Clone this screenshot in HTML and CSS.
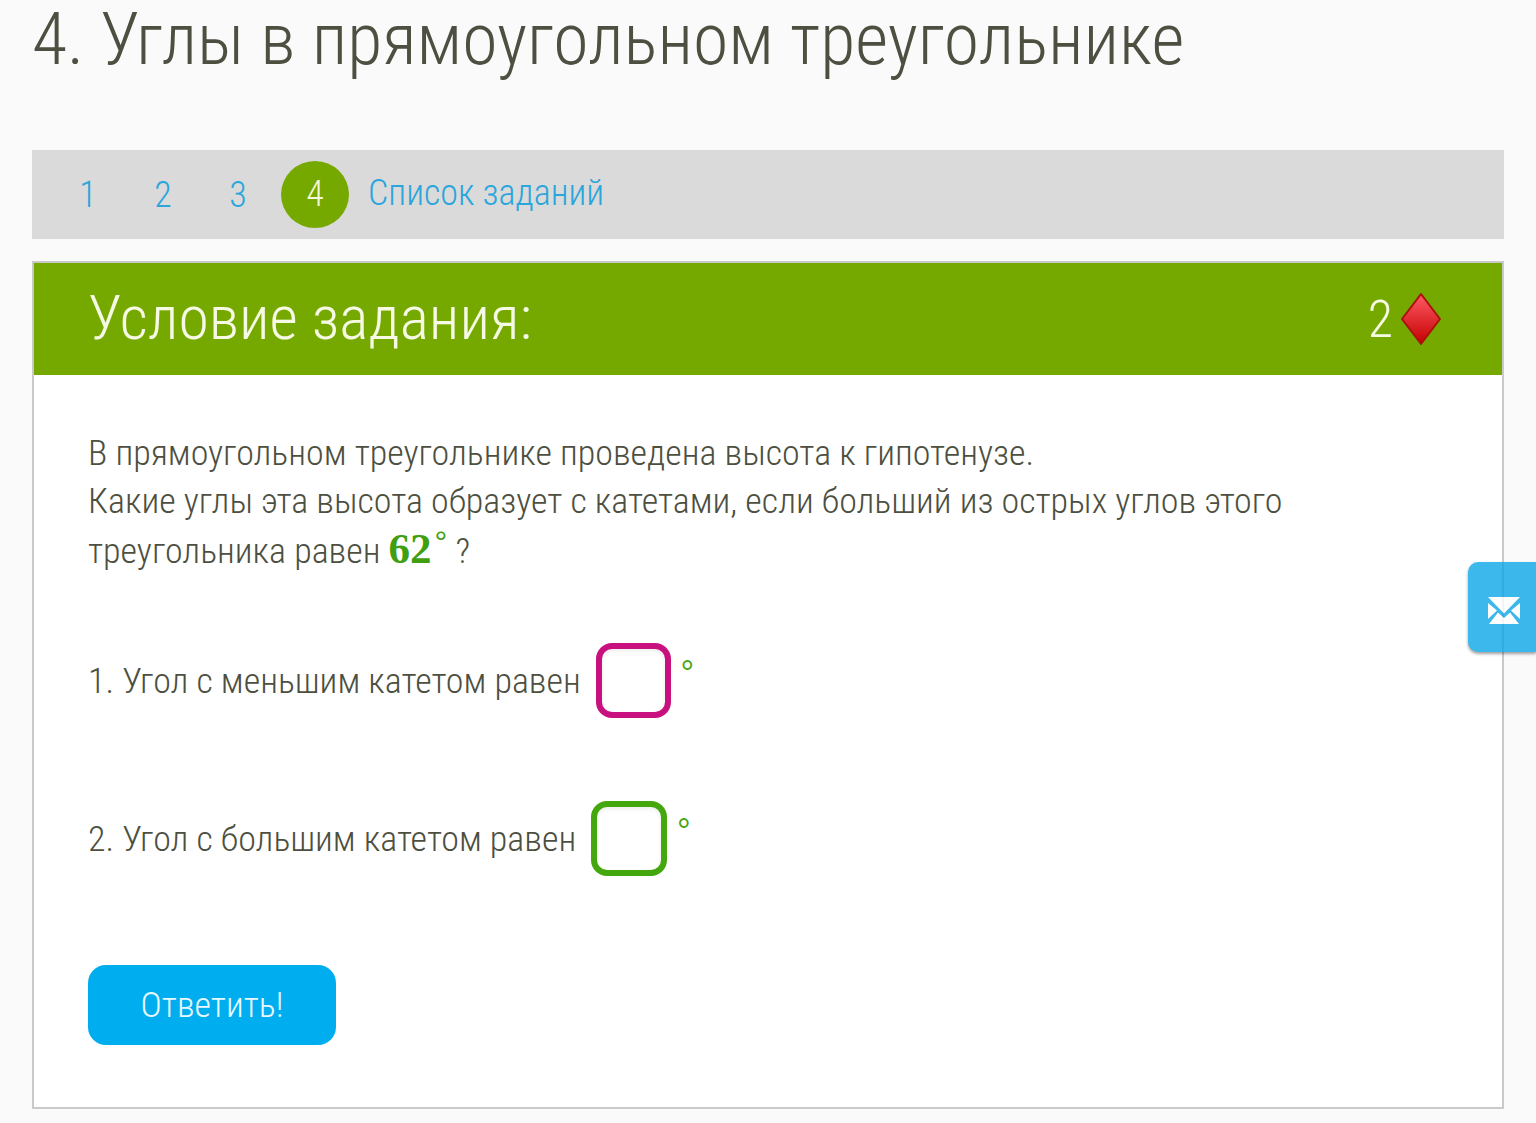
FILE: index.html
```html
<!DOCTYPE html>
<html lang="ru">

<head>
  <meta charset="UTF-8" />
  <meta name="viewport" content="width=device-width, initial-scale=1.0" />
  <title>Углы в прямоугольном треугольнике</title>
  <link rel="stylesheet" href="styles.css">
</head>

<body>
  <h1 class="title">4. Углы в прямоугольном треугольнике</h1>

  <nav class="tabs">
    <a class="tab">1</a>
    <a class="tab">2</a>
    <a class="tab">3</a>
    <a class="tab tab-active">4</a>
    <a class="tab-list">Список заданий</a>
  </nav>

  <section class="card">
    <header class="card-head">
      <h2 class="card-title">Условие задания:</h2>
      <div class="points">
        <span>2</span>
        <svg class="diamond" width="42" height="54" viewBox="0 0 42 54">
          <defs>
            <linearGradient id="ruby" x1="0" y1="0" x2="0" y2="1">
              <stop offset="0" stop-color="#ff5a66" />
              <stop offset="1" stop-color="#c40000" />
            </linearGradient>
          </defs>
          <path d="M21 2 L40 27 L21 52 L2 27 Z" fill="url(#ruby)" stroke="#a81208" stroke-width="2" stroke-linejoin="round" />
        </svg>
      </div>
    </header>

    <div class="card-body">
      <p class="task">В прямоугольном треугольнике проведена высота к гипотенузе.<br>
        Какие углы эта высота образует с катетами, если больший из острых углов этого<br>
        треугольника равен <span class="math">62<span class="deg">°</span></span> ?</p>

      <div class="answer answer-first">
        <span class="answer-label">1. Угол с меньшим катетом равен</span>
        <input class="box box-pink" />
        <span class="unit">°</span>
      </div>

      <div class="answer answer-second">
        <span class="answer-label">2. Угол с большим катетом равен</span>
        <input class="box box-green" />
        <span class="unit">°</span>
      </div>

      <button class="submit">Ответить!</button>
    </div>
  </section>

  <a class="mail">
    <svg class="mail-icon" width="32" height="27" viewBox="0 0 32 27">
      <path d="M0 0 H32 L16 16.5 Z M0 6 L9 13.5 L0 22 Z M32 6 L23 13.5 L32 22 Z M1 27 L10 15.5 L16 21 L22 15.5 L31 27 Z" fill="#fff" />
    </svg>
  </a>
</body>

</html>
```

FILE: styles.css
```css
body {
  margin: 0;
  height: 1123px;
  overflow: hidden;
  background: #fafafa;
  color: #4d4f40;
  font-family: "Roboto", "Liberation Sans", sans-serif;
  font-stretch: 75%;
  font-weight: 300;
  padding: 0 32px;
  box-sizing: border-box;
  position: relative;
}

.title {
  margin: 0;
  height: 150px;
  font-size: 71.9px;
  line-height: 79px;
  font-weight: 300;
  white-space: nowrap;
}

.tabs {
  display: flex;
  align-items: center;
  height: 89px;
  padding-left: 22px;
  background: #dadada;
  color: #2ba6dc;
  font-size: 36px;
}

.tab {
  width: 68px;
  height: 68px;
  margin-right: 7px;
  border-radius: 50%;
  display: flex;
  align-items: center;
  justify-content: center;
}

.tab-active {
  height: 67px;
  margin: -1px 7px 0 2px;
  background: #76a900;
  color: #f4f8dc;
}

.tab-list {
  margin: -3px 0 0 12px;
}

.card {
  margin-top: 22px;
  height: 848px;
  box-sizing: border-box;
  border: 2px solid #c9c9c9;
  background: #fff;
}

.card-head {
  display: flex;
  align-items: center;
  justify-content: space-between;
  height: 112px;
  padding: 0 60px 0 54px;
  background: #76a900;
  color: #f6fae4;
}

.card-title {
  margin: -2px 0 0;
  font-size: 61.8px;
  font-weight: 300;
}

.points {
  display: flex;
  align-items: center;
  gap: 7px;
  font-size: 52px;
}

.card-body {
  padding: 54px 54px 0;
  font-size: 35.97px;
}

.task {
  margin: 0;
  line-height: 48px;
}

.math {
  font-family: "Liberation Serif", serif;
  font-stretch: normal;
  font-weight: 700;
  color: #3f9f10;
  font-size: 43px;
}

.deg {
  font-family: "Liberation Sans", sans-serif;
  font-size: 32px;
  font-weight: 400;
  vertical-align: 10px;
  line-height: 0;
  margin-left: 3px;
}

.answer {
  display: flex;
  align-items: center;
  height: 76px;
}

.answer-label {
  margin-top: 2px;
}

.answer-first {
  margin-top: 67px;
}

.answer-second {
  margin-top: 82px;
}

.box {
  width: 75px;
  height: 75px;
  margin-left: 15px;
  padding: 0;
  box-sizing: border-box;
  background: #fff;
  border: 6px solid;
  border-radius: 16px;
  box-shadow: inset 0 2px 4px rgba(0, 0, 0, 0.08);
  outline: none;
}

.box-pink {
  border-color: #c9107f;
}

.box-green {
  width: 76px;
  border-color: #45a70e;
}

.unit {
  margin: -6px 0 0 9px;
  color: #45a70e;
  font-size: 40px;
  line-height: 40px;
}

.submit {
  display: block;
  width: 248px;
  height: 80px;
  margin-top: 89px;
  border: none;
  border-radius: 18px;
  background: #00aeef;
  color: #e8f8ff;
  font: inherit;
  font-stretch: 75%;
}

.mail {
  position: absolute;
  top: 562px;
  right: 0;
  width: 68px;
  height: 90px;
  display: flex;
  align-items: center;
  justify-content: center;
  border-radius: 10px 0 0 10px;
  background: #0ca7e8;
  opacity: 0.8;
  box-shadow: 0 2px 3px rgba(0, 0, 0, 0.45);
}

.mail-icon {
  margin: 6px 0 0 4px;
}
```
